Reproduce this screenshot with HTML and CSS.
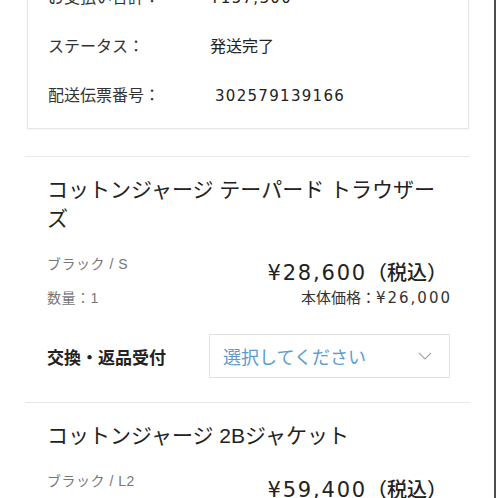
FILE: index.html
```html
<!DOCTYPE html>
<html lang="ja">
<head>
    <meta charset="UTF-8">
    <meta name="viewport" content="width=device-width, initial-scale=1.0">
    <title>注文詳細</title>
    <link rel="stylesheet" href="styles.css">
</head>
<body>
    <div class="screen">
        <div class="order-summary">
            <div class="summary-row">
                <span class="summary-label">お支払い合計：</span>
                <span class="summary-value num">¥157,300</span>
            </div>
            <div class="summary-row">
                <span class="summary-label">ステータス：</span>
                <span class="summary-value">発送完了</span>
            </div>
            <div class="summary-row">
                <span class="summary-label">配送伝票番号：</span>
                <span class="summary-value num tracking">302579139166</span>
            </div>
        </div>

        <div class="item">
            <h2 class="item-name">コットンジャージ テーパード トラウザーズ</h2>
            <div class="item-info">
                <div class="item-spec">
                    <p>ブラック / S</p>
                    <p>数量：1</p>
                </div>
                <div class="item-price">
                    <p class="price-total"><span class="num">¥28,600</span>（税込）</p>
                    <p class="price-base">本体価格：<span class="num">¥26,000</span></p>
                </div>
            </div>
            <div class="return-row">
                <span class="return-label">交換・返品受付</span>
                <div class="select-box">
                    <span>選択してください</span>
                    <svg width="14" height="8" viewBox="0 0 14 8">
                        <polyline points="1,1 7,7 13,1" fill="none" stroke="#a8a8a8" stroke-width="1.2"/>
                    </svg>
                </div>
            </div>
        </div>

        <div class="item">
            <h2 class="item-name">コットンジャージ 2Bジャケット</h2>
            <div class="item-info">
                <div class="item-spec">
                    <p>ブラック / L2</p>
                    <p>数量：1</p>
                </div>
                <div class="item-price">
                    <p class="price-total"><span class="num">¥59,400</span>（税込）</p>
                    <p class="price-base">本体価格：<span class="num">¥54,000</span></p>
                </div>
            </div>
        </div>
    </div>
</body>
</html>
```

FILE: styles.css
```css
body {
    margin: 0;
    background-color: white;
    font-family: "Liberation Sans", "Noto Sans CJK JP", sans-serif;
    color: #222;
}
p {
    margin: 0;
}
.num {
    font-family: "DejaVu Sans", "Liberation Sans", sans-serif;
}
.screen {
    width: 496px;
    height: 498px;
    overflow: hidden;
    border-right: 2px solid #4d4d4d;
    box-sizing: border-box;
    padding-left: 25px;
}
.order-summary {
    width: 442px;
    margin: -27px 0 0 2px;
    padding: 0 20px 7px;
    border: 1px solid #e6e6e6;
    box-sizing: border-box;
    box-shadow: 0 1px 2px rgba(0,0,0,0.04);
}
.summary-row {
    display: flex;
    padding: 12px 0 13px;
    font-size: 16px;
    line-height: 24px;
}
.summary-label {
    width: 162px;
    color: #333;
}
.summary-value {
    color: #222;
}
.summary-value.num {
    font-size: 15px;
    letter-spacing: 1.3px;
}
.summary-value.tracking {
    margin-left: 5px;
}
.order-summary + .item {
    margin-top: 27px;
}
.item {
    width: 445px;
    border-top: 1px solid #e8e8e8;
    padding: 18px 20px 0 22px;
    box-sizing: border-box;
}
.item-name {
    margin: 0;
    font-size: 21px;
    font-weight: normal;
    line-height: 29px;
    color: #222;
}
.item-info {
    display: flex;
    justify-content: space-between;
    margin-top: 21px;
}
.item-spec {
    font-size: 14px;
    line-height: 20px;
    color: #777;
    letter-spacing: 0.5px;
}
.item-spec p + p {
    margin-top: 14px;
}
.item-price {
    margin-top: 5px;
    text-align: right;
}
.price-total {
    font-size: 20px;
    line-height: 28px;
    font-weight: 500;
    color: #222;
    margin-right: 3px;
}
.price-total .num {
    font-size: 21px;
    font-weight: normal;
    letter-spacing: 1.8px;
}
.price-base {
    font-size: 15px;
    line-height: 22px;
    color: #333;
}
.price-base .num {
    letter-spacing: 2px;
    margin-right: -2px;
}
.return-row {
    display: flex;
    align-items: center;
    margin-top: 25px;
    padding-bottom: 24px;
}
.return-label {
    width: 162px;
    font-size: 17px;
    font-weight: bold;
    color: #222;
}
.select-box {
    flex: 1;
    height: 44px;
    border: 1px solid #e2e2e2;
    box-sizing: border-box;
    display: flex;
    align-items: center;
    justify-content: space-between;
    padding: 0 17px 0 13px;
    font-size: 18px;
    color: #5b9bd0;
}
```
